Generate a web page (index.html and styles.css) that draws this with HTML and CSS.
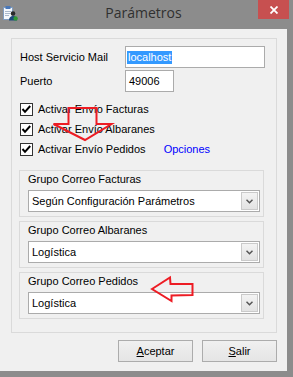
FILE: index.html
```html
<!DOCTYPE html>
<html lang="es">
<head>
<meta charset="utf-8">
<title>Parámetros</title>
<link rel="stylesheet" href="styles.css">
</head>
<body>
<div class="window">
  <div class="titlebar">
    <svg class="app-icon" viewBox="0 0 16 16" width="16" height="16">
      <rect x="1.5" y="2.5" width="9" height="12" fill="#f4f8fc" stroke="#7f9cc0"/>
      <rect x="3.5" y="1" width="5" height="3" fill="#4a78b8"/>
      <path d="M3 6.5h6M3 8.5h5M3 10.5h4" stroke="#a8b8cc" stroke-width="1"/>
      <circle cx="11" cy="8.5" r="2.3" fill="#2a2a2a"/>
      <path d="M7 15.5q0-4.5 4-4.5t4 4.5z" fill="#1d4a7a"/>
      <circle cx="13.6" cy="13.4" r="2.2" fill="#2e9a32"/>
    </svg>
    <div class="title">Parámetros</div>
    <div class="close">
      <svg viewBox="0 0 8 8" width="8" height="8"><path d="M0.5 0.5L7.5 7.5M7.5 0.5L0.5 7.5" stroke="#fff" stroke-width="1.8"/></svg>
    </div>
  </div>
  <div class="client">
    <div class="frame">
      <div class="field-row host">
        <span class="label">Host Servicio Mail</span>
        <div class="input wide"><span class="sel">localhost</span></div>
      </div>
      <div class="field-row port">
        <span class="label">Puerto</span>
        <div class="input narrow">49006</div>
      </div>
      <div class="checks">
        <div class="check-row">
          <svg class="cb" viewBox="0 0 13 13" width="13" height="13"><rect x="0.5" y="0.5" width="12" height="12" fill="#fff" stroke="#333"/><path d="M2.5 6 L5 8.8 L10.2 3" fill="none" stroke="#000" stroke-width="2"/></svg>
          <span>Activar Envío Facturas</span>
        </div>
        <div class="check-row">
          <svg class="cb" viewBox="0 0 13 13" width="13" height="13"><rect x="0.5" y="0.5" width="12" height="12" fill="#fff" stroke="#333"/><path d="M2.5 6 L5 8.8 L10.2 3" fill="none" stroke="#000" stroke-width="2"/></svg>
          <span>Activar Envío Albaranes</span>
        </div>
        <div class="check-row">
          <svg class="cb" viewBox="0 0 13 13" width="13" height="13"><rect x="0.5" y="0.5" width="12" height="12" fill="#fff" stroke="#333"/><path d="M2.5 6 L5 8.8 L10.2 3" fill="none" stroke="#000" stroke-width="2"/></svg>
          <span>Activar Envío Pedidos</span>
          <span class="link">Opciones</span>
        </div>
      </div>
      <div class="groups">
        <div class="group">
          <div class="group-label">Grupo Correo Facturas</div>
          <div class="combo"><span>Según Configuración Parámetros</span><span class="drop"><svg viewBox="0 0 7 5" width="7" height="5"><path d="M0.5 0.8L3.5 3.8L6.5 0.8" fill="none" stroke="#555" stroke-width="1.5"/></svg></span></div>
        </div>
        <div class="group">
          <div class="group-label">Grupo Correo Albaranes</div>
          <div class="combo"><span>Logística</span><span class="drop"><svg viewBox="0 0 7 5" width="7" height="5"><path d="M0.5 0.8L3.5 3.8L6.5 0.8" fill="none" stroke="#555" stroke-width="1.5"/></svg></span></div>
        </div>
        <div class="group">
          <div class="group-label">Grupo Correo Pedidos</div>
          <div class="combo"><span>Logística</span><span class="drop"><svg viewBox="0 0 7 5" width="7" height="5"><path d="M0.5 0.8L3.5 3.8L6.5 0.8" fill="none" stroke="#555" stroke-width="1.5"/></svg></span></div>
        </div>
      </div>
    </div>
    <div class="buttons">
      <button class="btn"><u>A</u>ceptar</button>
      <button class="btn"><u>S</u>alir</button>
    </div>
  </div>
  <svg class="annot" viewBox="0 0 293 377" width="293" height="377">
    <polygon points="68.5,108 96.5,108 96.5,124 111.5,124 85,140 53.5,124 68.5,124" fill="none" stroke="#ed1c24" stroke-width="2"/>
    <polygon points="152,289 170,277.5 170.5,284 192.5,284 192.5,295 171.5,295.5 171.5,301" fill="none" stroke="#ed1c24" stroke-width="2"/>
  </svg>
</div>
</body>
</html>
```

FILE: styles.css
```css
html, body {
  margin: 0;
  padding: 0;
  background: #8c8c8c;
}

body {
  font-family: "Liberation Sans", Arial, sans-serif;
  font-size: 11px;
  color: #000;
}

.window {
  position: relative;
  width: 293px;
  height: 377px;
  background: #8c8c8c;
  display: flex;
  flex-direction: column;
  overflow: hidden;
}

.titlebar {
  height: 29px;
  flex-shrink: 0;
  display: flex;
  align-items: flex-start;
}

.app-icon {
  display: block;
  margin: 5px 0 0 2px;
}

.title {
  flex: 1;
  text-align: center;
  font-family: "Open Sans", "Noto Sans", sans-serif;
  font-size: 14px;
  line-height: 26px;
  color: #303030;
  padding-left: 11px;
}

.close {
  width: 31px;
  height: 19px;
  margin-right: 4px;
  background: #c75050;
  display: flex;
  align-items: center;
  justify-content: center;
}

.close svg {
  display: block;
}

.client {
  height: 342px;
  margin-right: 6px;
  box-sizing: border-box;
  background: #f0f0f0;
  padding: 9px 10px 0 11px;
  display: flex;
  flex-direction: column;
}

.frame {
  width: 266px;
  height: 295px;
  box-sizing: border-box;
  border: 1px solid #dadada;
  padding: 0 0 0 8px;
}

.field-row {
  display: flex;
  align-items: center;
  height: 22px;
}

.host {
  margin-top: 7px;
}

.port {
  margin-top: 2px;
}

.label {
  width: 105px;
  flex-shrink: 0;
}

.input {
  height: 22px;
  box-sizing: border-box;
  border: 1px solid #ababab;
  background: #fff;
  padding: 0 0 0 2px;
  line-height: 20px;
  display: flex;
  align-items: center;
}

.wide {
  width: 140px;
  padding-left: 1px;
}

.narrow {
  width: 49px;
  padding-left: 3px;
}

.sel {
  display: inline-block;
  background: #3399ff;
  color: #fff;
  line-height: 13px;
  padding: 0 1px;
}

.checks {
  margin-top: 7px;
  display: flex;
  flex-direction: column;
}

.check-row {
  height: 20px;
  display: flex;
  align-items: center;
}

.cb {
  display: block;
  margin-right: 5px;
  flex-shrink: 0;
}

.link {
  color: #0000ff;
  margin-left: 18px;
}

.groups {
  margin: 11px 0 0 -1px;
  display: flex;
  flex-direction: column;
  gap: 4px;
}

.group {
  width: 245px;
  height: 47px;
  box-sizing: border-box;
  border: 1px solid #dadada;
  padding: 2px 3px 0 8px;
}

.group-label {
  height: 13px;
  line-height: 13px;
  margin-bottom: 4px;
}

.combo {
  height: 22px;
  box-sizing: border-box;
  border: 1px solid #ababab;
  background: #fff;
  display: flex;
  align-items: center;
  justify-content: space-between;
  padding: 0 1px 0 3px;
}

.drop {
  width: 17px;
  height: 18px;
  box-sizing: border-box;
  border: 1px solid #cacaca;
  background: linear-gradient(#f3f3f3, #e3e3e3);
  display: flex;
  align-items: center;
  justify-content: center;
}

.drop svg {
  display: block;
}

.buttons {
  display: flex;
  justify-content: flex-end;
  gap: 9px;
  margin-top: 7px;
}

.btn {
  width: 75px;
  height: 22px;
  box-sizing: border-box;
  border: 1px solid #acacac;
  background: linear-gradient(#f0f0f0, #e5e5e5);
  font-family: "Liberation Sans", Arial, sans-serif;
  font-size: 11px;
  color: #000;
  padding: 0;
}

.annot {
  position: absolute;
  top: 0;
  left: 0;
  pointer-events: none;
}
```
